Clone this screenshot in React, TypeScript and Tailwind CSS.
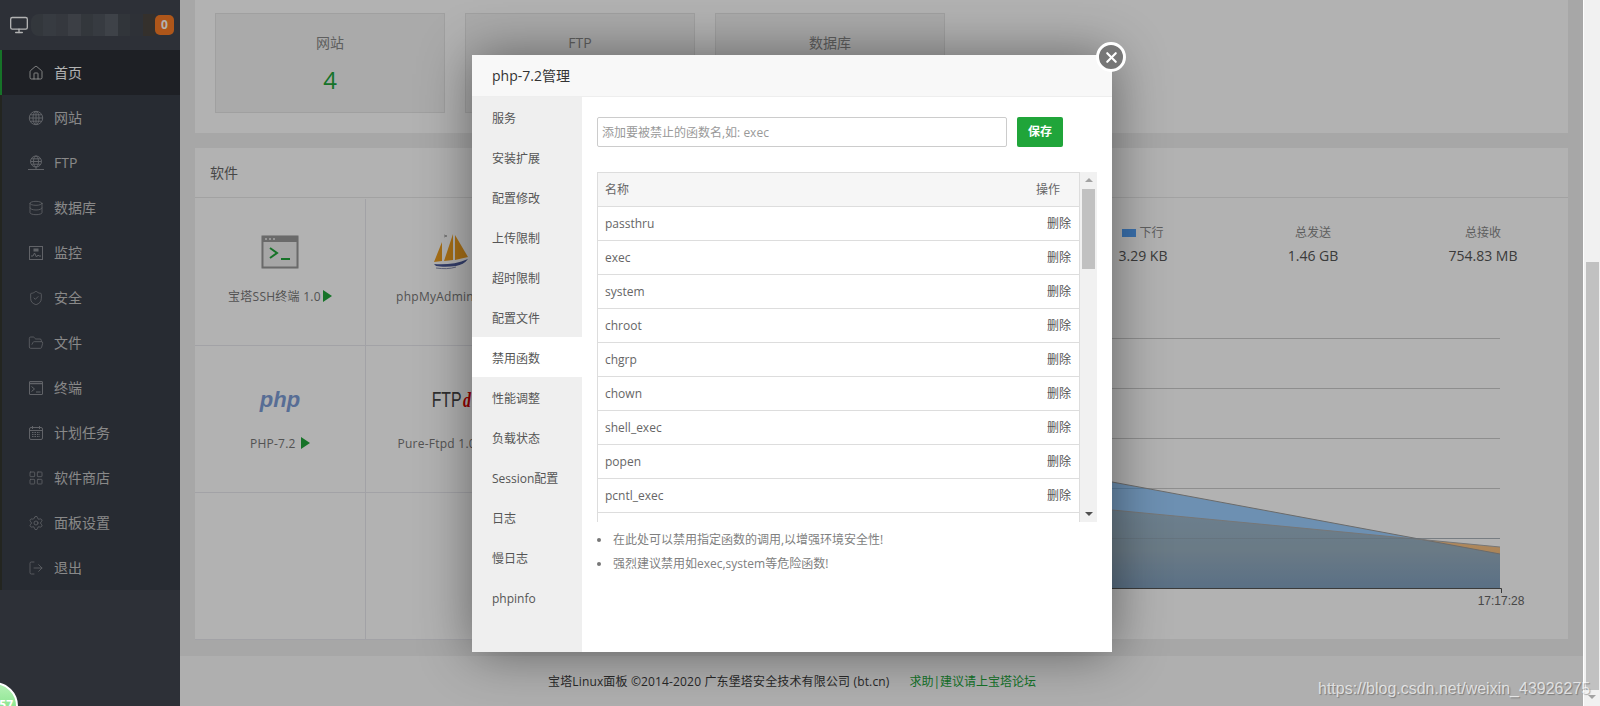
import React from 'react';
import { Database, FolderOpen, Home, LayoutGrid, LogOut, Monitor, Settings, ShieldCheck, X } from 'lucide-react';

const GlobeIcon = ({ base = false }: { base?: boolean }) => (
  <svg width="16" height="16" viewBox="0 0 16 16" fill="none" stroke="currentColor" strokeWidth="1">
    {base ? (
      <>
        <circle cx="8" cy="6.5" r="5.5" />
        <ellipse cx="8" cy="6.5" rx="2.5" ry="5.5" />
        <path d="M2.5 6.5h11M3.3 3.8h9.4M3.3 9.2h9.4M8 12v3M0 14.5h16" />
      </>
    ) : (
      <>
        <circle cx="8" cy="8" r="6.7" />
        <ellipse cx="8" cy="8" rx="3" ry="6.7" />
        <path d="M1.3 8h13.4M2.3 4.8h11.4M2.3 11.2h11.4M8 1.3v13.4" />
      </>
    )}
  </svg>
);

const MonitorChartIcon = () => (
  <svg width="16" height="16" viewBox="0 0 16 16" fill="none" stroke="currentColor" strokeWidth="1">
    <rect x="1.5" y="1.5" width="13" height="13" />
    <path d="M3 11h2l1.5-3 2 4 1.5-2 1 1h2" />
    <rect x="5.5" y="3.5" width="5" height="3" fill="currentColor" stroke="none" />
  </svg>
);

const TerminalIcon = () => (
  <svg width="16" height="16" viewBox="0 0 16 16" fill="none" stroke="currentColor" strokeWidth="1">
    <rect x="1.5" y="1.5" width="13" height="13" rx="0.5" />
    <path d="M2 3.5h12" strokeWidth="1.5" />
    <path d="M3.5 6.5l3 2.5-3 2.5M8 12h4.5" />
  </svg>
);

const CalendarIcon = () => (
  <svg width="16" height="16" viewBox="0 0 16 16" fill="none" stroke="currentColor" strokeWidth="1">
    <rect x="1.5" y="2.5" width="13" height="12" rx="1.5" />
    <path d="M4.5 1v3M11.5 1v3M2 5.5h12" />
    <path d="M4 7.5h8M4 9.5h8M4 11.5h8" strokeDasharray="1.5 1" strokeWidth="1.2" />
  </svg>
);

const navItems: { label: string; icon: React.ReactNode }[] = [
  { label: '首页', icon: <Home size={16} strokeWidth={1.2} /> },
  { label: '网站', icon: <GlobeIcon /> },
  { label: 'FTP', icon: <GlobeIcon base /> },
  { label: '数据库', icon: <Database size={16} strokeWidth={1.2} /> },
  { label: '监控', icon: <MonitorChartIcon /> },
  { label: '安全', icon: <ShieldCheck size={16} strokeWidth={1.2} /> },
  { label: '文件', icon: <FolderOpen size={16} strokeWidth={1.2} /> },
  { label: '终端', icon: <TerminalIcon /> },
  { label: '计划任务', icon: <CalendarIcon /> },
  { label: '软件商店', icon: <LayoutGrid size={16} strokeWidth={1.2} /> },
  { label: '面板设置', icon: <Settings size={16} strokeWidth={1.2} /> },
  { label: '退出', icon: <LogOut size={16} strokeWidth={1.2} /> },
];

const menuItems = ['服务', '安装扩展', '配置修改', '上传限制', '超时限制', '配置文件', '禁用函数', '性能调整', '负载状态', 'Session配置', '日志', '慢日志', 'phpinfo'];
const disabledFns = ['passthru', 'exec', 'system', 'chroot', 'chgrp', 'chown', 'shell_exec', 'popen', 'pcntl_exec', ''];

// mosaic covering the account name in the sidebar header
const mosaic = ['#4a4f57', '#50555d', '#4c5159', '#565b63', '#4a4f57', '#50555d', '#5a5f67', '#474c54', '#43474f', '#4b4640'];

const Play = () => <span className="ml-[2px] inline-block h-0 w-0 border-y-[6px] border-l-[9px] border-y-transparent border-l-[#20a53a] align-[-1px]" />;

const TerminalLogo = () => (
  <svg width="38" height="34" viewBox="0 0 38 34">
    <rect x="0.5" y="0.5" width="37" height="33" rx="1.5" fill="#eee" />
    <rect x="1.5" y="1.5" width="35" height="31" fill="none" stroke="#999" strokeWidth="2" />
    <rect x="1" y="1" width="36" height="6" fill="#999" />
    <circle cx="5" cy="4" r="1" fill="#eee" /><circle cx="9" cy="4" r="1" fill="#eee" /><circle cx="13" cy="4" r="1" fill="#eee" />
    <path d="M9 13l7 5-7 5" fill="none" stroke="#20a53a" strokeWidth="2" />
    <path d="M20 24h9" stroke="#20a53a" strokeWidth="2" />
  </svg>
);

const SailLogo = () => (
  <svg width="36" height="38" viewBox="0 0 36 38">
    <path d="M9 9L1 29l8-1z" fill="#f0a020" />
    <path d="M20 1L11 28l9-1z" fill="#f0a020" />
    <path d="M22 2l13 22-13 3z" fill="#f0a020" />
    <path d="M11 2l3 1M11 4l3-1" stroke="#888" strokeWidth="0.7" />
    <path d="M1 31c10 1 23 0 34-5-3 4-7 6-12 7-7 1-15 1-20 0z" fill="#4a5a9a" />
    <path d="M3 35c7 1 14 1 20-1" stroke="#8a90b0" fill="none" />
  </svg>
);

const SoftCell = ({ logo, label }: { logo?: React.ReactNode; label?: React.ReactNode }) => (
  <div className="flex h-[147px] w-[171px] shrink-0 flex-col items-center border-r border-b border-[#e8e8ee] pt-[34px]">
    <div className="flex h-[38px] items-center">{logo}</div>
    <div className="mt-[17px] text-[12px] tracking-[0.25px] whitespace-nowrap text-[#777]">{label}</div>
  </div>
);

const StatCard = ({ title, value }: { title: string; value: string }) => (
  <div className="flex h-[100px] w-[230px] flex-col items-center border border-[#e6e6e6] bg-[#f4f4f4] pt-[18px]">
    <div className="text-[14px] text-[#888]">{title}</div>
    <div className="mt-[9px] text-[24px] leading-[36px] text-[#20a53a]">{value}</div>
  </div>
);

const TrafficStat = ({ title, value, legend }: { title: string; value: string; legend?: boolean }) => (
  <div className="flex w-[170px] flex-col items-center">
    <div className="flex h-[18px] items-center text-[12px] text-[#888]">
      {legend && <span className="mr-[3px] h-[8px] w-[14px] bg-[#53a3f9]" />}
      {title}
    </div>
    <div className="mt-[4px] text-[14px] leading-[20px] text-[#555]">{value}</div>
  </div>
);

const TrafficChart = () => (
  <svg width="680" height="290" viewBox="888 330 680 290" className="font-['Liberation_Sans',sans-serif]">
    <defs>
      <linearGradient id="downFill" x1="0" y1="488" x2="0" y2="588" gradientUnits="userSpaceOnUse">
        <stop offset="0" stopColor="#ffd6a7" />
        <stop offset="0.62" stopColor="#f8c080" />
        <stop offset="1" stopColor="#caa27f" />
      </linearGradient>
    </defs>
    {[338, 388, 438, 488, 538].map((y) => (
      <path key={y} d={`M888 ${y + 0.5}H1500`} stroke="#ccc" />
    ))}
    <path d="M888 488.6L1500 547V588H888z" fill="url(#downFill)" />
    <path d="M888 440.4L1500 554V588H888z" fill="#3aa0ff" fillOpacity="0.5" />
    <path d="M888 440.4L1500 554" stroke="#999" fill="none" />
    <path d="M888 488.6L1500 547" stroke="#aaa" fill="none" />
    <path d="M888 538.5H1500" stroke="#8a9aa8" strokeOpacity="0.5" />
    <path d="M888 588.5H1501.5V593" stroke="#555" fill="none" />
    <text x="1501" y="605" textAnchor="middle" fontSize="12" fill="#666">17:17:28</text>
  </svg>
);

export default function App() {
  return (
    <div className="relative flex h-[706px] w-[1600px] overflow-hidden bg-[#f0f0f0] font-['Open_Sans','Noto_Sans_CJK_SC',sans-serif]">
      {/* Sidebar */}
      <aside className="flex w-[180px] shrink-0 flex-col bg-[#414650]">
        <div className="flex h-[50px] items-center pr-[6px] pl-[9px] text-[#fff]">
          <Monitor size={20} strokeWidth={1.6} />
          <div className="ml-[2px] flex h-[22px] w-[124px] items-stretch overflow-hidden rounded-l-[8px]">
            {mosaic.map((c, i) => (
              <div key={i} className="flex-1" style={{ backgroundColor: c }} />
            ))}
          </div>
          <span className="flex h-[20px] w-[19px] items-center justify-center rounded-[5px] bg-[#f97c26] text-[12px] font-bold text-white">0</span>
        </div>
        <nav className="bg-[#393e48]">
          {navItems.map((item, i) => (
            <div
              key={item.label}
              className={i === 0
                ? 'flex h-[45px] items-center border-l-2 border-[#20a53a] bg-[#2b2f35] pl-[26px] text-[14px] text-[#fff]'
                : 'flex h-[45px] items-center border-l-2 border-[#33362f] pl-[26px] text-[14px] text-[#c4c4c4]'}
            >
              <span className={i === 0 ? 'mr-[10px] flex w-[16px] text-[#ddd]' : 'mr-[10px] flex w-[16px] text-[#8b8f96]'}>{item.icon}</span>
              {item.label}
            </div>
          ))}
        </nav>
      </aside>

      {/* Page content */}
      <main className="flex min-w-0 flex-1 flex-col pr-[15px] pl-[15px]">
        <section className="flex h-[133px] shrink-0 gap-[20px] bg-white pt-[13px] pl-[20px]">
          <StatCard title="网站" value="4" />
          <StatCard title="FTP" value="2" />
          <StatCard title="数据库" value="4" />
        </section>
        <section className="mt-[15px] flex h-[491px] shrink-0 flex-col bg-white">
          <div className="flex h-[50px] shrink-0 items-center border-b border-[#e8e8e8] pl-[15px] text-[14px] text-[#666]">软件</div>
          <div className="mt-[1px] flex min-h-0 flex-1">
            <div className="flex w-[693px] shrink-0 flex-wrap content-start">
              <SoftCell logo={<TerminalLogo />} label={<>宝塔SSH终端 1.0<Play /></>} />
              <SoftCell logo={<SailLogo />} label={<>phpMyAdmin 4.7<Play /></>} />
              <SoftCell />
              <SoftCell />
              <SoftCell
                logo={<span className="font-['Liberation_Sans',sans-serif] text-[22px] font-bold text-[#7d9dd6] italic">php</span>}
                label={<>PHP-7.2 <Play /></>}
              />
              <SoftCell
                logo={
                  <span className="inline-block scale-x-[0.72] font-['Liberation_Sans',sans-serif] text-[22px] text-[#444]">
                    FTP<span className="pl-[2px] font-['Liberation_Serif',serif] font-bold text-[#d80000] italic">d</span>
                  </span>
                }
                label={<>Pure-Ftpd 1.0.49<Play /></>}
              />
              <SoftCell />
              <SoftCell />
              <SoftCell />
              <SoftCell />
            </div>
            <div className="flex w-[680px] shrink-0 flex-col pt-[25px]">
              <div className="flex h-[50px] shrink-0">
                <TrafficStat title="上行" value="3.08 KB" />
                <TrafficStat title="下行" value="3.29 KB" legend />
                <TrafficStat title="总发送" value="1.46 GB" />
                <TrafficStat title="总接收" value="754.83 MB" />
              </div>
              <div className="mt-[56px]">
                <TrafficChart />
              </div>
            </div>
          </div>
        </section>
        <footer className="mx-[-15px] mt-[17px] flex flex-1 items-center bg-[#fbfbfb] pt-[2px] pl-[368px] text-[12px] tracking-[0.15px] text-[#3a3a3a]">
          <span>宝塔Linux面板 ©2014-2020 广东堡塔安全技术有限公司 (bt.cn)</span>
          <span className="ml-[20px] tracking-normal text-[#20a53a]">求助|建议请上宝塔论坛</span>
        </footer>
      </main>

      {/* Browser scrollbar */}
      <div className="relative z-10 flex w-[17px] shrink-0 flex-col items-center border-l border-white bg-[#f1f1f1]">
        <div className="mt-[262px] h-[428px] w-[13px] bg-[#c1c1c1]" />
        <div className="mt-[5px] h-0 w-0 border-x-[4px] border-t-[4px] border-x-transparent border-t-[#a3a3a3]" />
      </div>

      {/* Layer mask */}
      <div className="absolute top-0 bottom-0 left-0 right-[17px] bg-black/30" />

      {/* Green ball cut by the page corner */}
      <div className="absolute top-[682px] left-[-30px] flex h-[48px] w-[48px] justify-end rounded-full border-2 border-white bg-linear-to-b from-[#b5f0b5] to-[#5fdc6e] pt-[14px] pr-[3px] text-[12px] leading-[14px] font-bold text-white">57</div>

      {/* Modal */}
      <div className="absolute top-[55px] left-[472px] flex h-[597px] w-[640px] flex-col bg-white shadow-[1px_1px_50px_rgba(0,0,0,0.45)]">
        <div className="flex h-[42px] shrink-0 items-center border-b border-[#eee] bg-[#f8f8f8] pl-[20px] text-[14px] text-[#333]">php-7.2管理</div>
        <div className="flex min-h-0 flex-1">
          <div className="w-[110px] shrink-0 bg-[#efefef]">
            {menuItems.map((m) => (
              <div key={m} className={m === '禁用函数' ? 'flex h-[40px] items-center bg-white pt-[3px] pl-[20px] text-[12px] text-[#555]' : 'flex h-[40px] items-center pt-[3px] pl-[20px] text-[12px] text-[#555]'}>{m}</div>
            ))}
          </div>
          <div className="min-w-0 flex-1 pt-[20px] pl-[15px]">
            <div className="flex items-center">
              <input
                readOnly
                placeholder="添加要被禁止的函数名,如: exec"
                className="h-[30px] w-[410px] rounded-[2px] border border-[#ccc] pl-[4px] text-[12px] outline-none placeholder:text-[#999]"
              />
              <button className="ml-[10px] h-[30px] w-[46px] rounded-[2px] bg-[#20a53a] text-[12px] font-bold text-white">保存</button>
            </div>
            <div className="mt-[25px] flex h-[350px] w-[500px]">
              <div className="h-full w-[483px] overflow-hidden">
                <table className="w-full border-collapse text-[12px]">
                  <thead>
                    <tr className="h-[34px] border border-[#ddd] bg-[#f6f6f6] text-[#666]">
                      <th className="pl-[7px] text-left font-normal">名称</th>
                      <th className="pr-[19px] text-right font-normal">操作</th>
                    </tr>
                  </thead>
                  <tbody>
                    {disabledFns.map((fn) => (
                      <tr key={fn} className="h-[34px] border border-[#ddd]">
                        <td className="pl-[7px] text-[#666]">{fn}</td>
                        <td className="pr-[8px] text-right text-[#555]">{fn && '删除'}</td>
                      </tr>
                    ))}
                  </tbody>
                </table>
              </div>
              <div className="flex w-[17px] shrink-0 flex-col items-center bg-[#f1f1f1]">
                <div className="mt-[6px] h-0 w-0 border-x-[4px] border-b-[4px] border-x-transparent border-b-[#a3a3a3]" />
                <div className="mt-[7px] h-[80px] w-[13px] bg-[#c1c1c1]" />
                <div className="mt-auto mb-[6px] h-0 w-0 border-x-[4px] border-t-[4px] border-x-transparent border-t-[#505050]" />
              </div>
            </div>
            <ul className="mt-[6px] text-[12px] leading-[24px] text-[#808080]">
              <li className="flex items-center"><span className="mr-[12px] h-[4px] w-[4px] rounded-full bg-[#777]" />在此处可以禁用指定函数的调用,以增强环境安全性!</li>
              <li className="flex items-center"><span className="mr-[12px] h-[4px] w-[4px] rounded-full bg-[#777]" />强烈建议禁用如exec,system等危险函数!</li>
            </ul>
          </div>
        </div>
        <button className="absolute top-[-13px] right-[-14px] flex h-[30px] w-[30px] items-center justify-center rounded-full border-[3px] border-white bg-[#777] text-white">
          <X size={17} strokeWidth={3} />
        </button>
      </div>

      {/* Blog watermark */}
      <div className="absolute top-[677px] left-[1318px] z-20 font-['Liberation_Sans',sans-serif] text-[16px] whitespace-nowrap text-white/70 [text-shadow:1px_1px_1px_rgba(0,0,0,0.3)]">https://blog.csdn.net/weixin_43926275</div>
    </div>
  );
}
